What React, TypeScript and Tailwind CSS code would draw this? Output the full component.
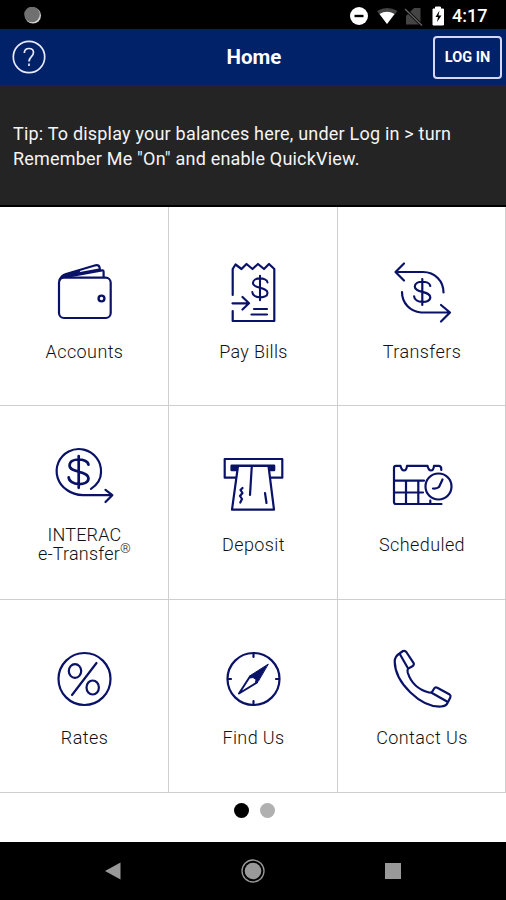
import type { ReactNode } from "react";

const NAVY = "#0a1268";

function Icon({ shift, children }: { shift: number; children: ReactNode }) {
  return (
    <svg
      width="110"
      height="85"
      viewBox={`${-shift} 0 110 85`}
      fill="none"
      stroke={NAVY}
      strokeWidth="2.2"
      strokeLinecap="round"
      strokeLinejoin="round"
      className="block shrink-0"
      aria-hidden="true"
    >
      {children}
    </svg>
  );
}

const DollarSign = ({ x, y, s = 1 }: { x: number; y: number; s?: number }) => (
  <g transform={`translate(${x} ${y}) scale(${s})`}>
    <path d="M0 -13V13M8 -6C7 -11.5 -7.5 -12 -7.5 -5.3C-7.5 1 8 -1.3 8 5.3C8 12 -8 11.3 -8.2 4.3" />
  </g>
);

const Wallet = () => (
  <Icon shift={1}>
    <rect x="29" y="27.7" width="51.7" height="40.3" rx="5" />
    <path d="M29.5 30C31 26 33 25 36 24L65.500 15.300Q69 14.800 69.500 17.300L70 20M36 27L72 20.300Q73.6 20 73.6 22V27M42 24.500L69 19.500" />
    <path d="M31.500 27.500C34 24 40 23.500 50 20.500L48 24L36 27Z" fill={NAVY} strokeWidth="1" />
    <circle cx="71.5" cy="48.5" r="2.900" strokeWidth="2.400" />
  </Icon>
);

const Bill = () => (
  <Icon shift={2}>
    <path d="M32.7 45V19L35.5 14.5L41.5 19L46.5 14L52.5 19L58 14L64 19L69 14L74.3 19V71H32.7V61" />
    <path d="M32.5 53.3H49M42.5 47L49 53.3L42.5 59.5M54 59H67M51.5 64.5H67" />
    <DollarSign x={60} y={38} s={0.94} />
  </Icon>
);

const Transfer = () => (
  <Icon shift={3}>
    <path d="M34 13.5L25.5 22L34 30.5M26 22H53C65 22 73.5 31 73.5 42.5" />
    <path d="M71 55L80 62.5L71 71.5M79 62.5H51C40 61.500 32 53 32 42" />
    <DollarSign x={52.3} y={42} />
  </Icon>
);

const Interac = () => (
  <Icon shift={1}>
    <path d="M61 48.8C67.500 44.500 71 38.500 71 32.500A22.200 22.200 0 1 0 37 50Q43.500 54.800 53 55.2H81.5M75.5 49.8L82.3 55.2L75.5 62" />
    <DollarSign x={48.7} y={32} s={1.22} />
  </Icon>
);

const Deposit = () => (
  <Icon shift={2}>
    <path d="M36 37.7H24.7V19H82.3V37.7H71" />
    <path d="M31.7 25.8H74V30H70.500V26M37.5 26V30H31.7V25.8" fill={NAVY} strokeWidth="2.6" />
    <path d="M38 27.500H68.500L74 69.7H32Z" fill="#fff" stroke="none" />
    <path d="M38 26L32 69.7H74L68.500 26M51.8 26L50 55" />
    <path d="M42.5 48L40.5 50L42.5 53L40 56L42 59L40.3 62.5M65 53L66.5 63" />
  </Icon>
);

const Calendar = () => (
  <Icon shift={3}>
    <path d="M71.5 64H26Q24 64 24 62V28Q24 25.8 26 25.8H30.5Q31.5 30.5 34 30.5T37 25.8H57.5Q58.5 30.5 61 30.5T64 25.8H69Q71.5 26 71.3 30" />
    <path d="M24.5 40.7H54M24.5 52.5H53M36 41V64M48.3 41V64M60.3 60.5V64" />
    <circle cx="68.5" cy="46.5" r="13" />
    <path d="M72.5 39.5L69 47Q67 48.8 63 48.5" />
  </Icon>
);

const Percent = () => (
  <Icon shift={1}>
    <circle cx="54.5" cy="39" r="26" />
    <path d="M66.5 23L42 55" />
    <ellipse cx="45" cy="31" rx="6.2" ry="6.9" />
    <ellipse cx="62.7" cy="47.5" rx="6.2" ry="7" />
  </Icon>
);

const Compass = () => (
  <Icon shift={2}>
    <circle cx="53.5" cy="39" r="26" />
    <path d="M53.5 14V17M53.5 61V64M28.5 39H31M76 39H79" />
    <path d="M50.300 36L39 53.5L57 42.500" strokeWidth="2" />
    <path d="M68 24.3L50.3 35.500L50 38L53 37.500L56 39.500L55.500 43L58 41.500Z" fill={NAVY} strokeWidth="1" />
  </Icon>
);

const Phone = () => (
  <Icon shift={3}>
    <path d="M29.5 13.5L33 11Q35 10.2 36.3 12L43.8 23.3Q44.3 25 42.8 26L38.2 28.6Q37 30 37.7 32.5C40.5 41.5 47.5 49.5 59 52.5Q61.5 53 62.3 51.5L64.5 48Q65.8 47 67.3 47.7L79.7 54.5Q81 55.5 80.3 57.5L77.5 63Q76 66.3 71 66.5C51 67.5 25 43 24.7 21.5Q24.7 16.5 29.5 13.5Z" />
    <path d="M29.8 14L37.8 28M62 53L77 61.5" />
  </Icon>
);

type Tile = { label: ReactNode; icon: ReactNode; tracking: string };

const rows: { box: string; label: string; tiles: Tile[] }[] = [
  {
    box: "h-[199px] pt-[43px]",
    label: "mt-[7px]",
    tiles: [
      { label: "Accounts", icon: <Wallet />, tracking: "tracking-[0.4px]" },
      { label: "Pay Bills", icon: <Bill />, tracking: "tracking-[0.3px]" },
      { label: "Transfers", icon: <Transfer />, tracking: "tracking-[0.4px]" },
    ],
  },
  {
    box: "h-[194px] pt-[34px]",
    label: "mt-[10px]",
    tiles: [
      {
        label: (
          <span className="-mt-[10px] block">
            INTERAC
            <br />
            e-Transfer<sup className="-top-[7px] text-[13.5px] leading-none">®</sup>
          </span>
        ),
        icon: <Interac />,
        tracking: "tracking-[0.2px]",
      },
      { label: "Deposit", icon: <Deposit />, tracking: "tracking-[0.4px]" },
      { label: "Scheduled", icon: <Calendar />, tracking: "tracking-[0.4px]" },
    ],
  },
  {
    box: "h-[193px] pt-[40px]",
    label: "mt-[3px]",
    tiles: [
      { label: "Rates", icon: <Percent />, tracking: "tracking-[0.4px]" },
      { label: "Find Us", icon: <Compass />, tracking: "tracking-[0.4px]" },
      { label: "Contact Us", icon: <Phone />, tracking: "tracking-[0.4px]" },
    ],
  },
];

function StatusBar() {
  return (
    <div className="flex h-[29px] items-center bg-black pt-[2px] pr-[18px] pl-[23px] text-white">
      <svg width="19" height="18" viewBox="0 0 19 18">
        <circle cx="10" cy="8.500" r="8" fill="#d5d5d5" />
        <circle cx="9" cy="7.500" r="7.8" fill="#707070" />
      </svg>
      <svg className="mr-[3px] ml-auto" width="96" height="20" viewBox="0 0 96 20">
        <circle cx="9" cy="10" r="9" fill="#fff" />
        <path d="M4.5 10H13.5" stroke="#000" strokeWidth="2.4" />
        <path d="M27 5Q37 -1 47.500 5L37 18Z" fill="#444" />
        <path d="M29.500 8Q37 3.500 44.500 8L37 18Z" fill="#fff" />
        <path d="M56 10L64 2H70.500V18.500H56Z" fill="#444" />
        <path d="M54 2L71.500 19" stroke="#000" strokeWidth="3" />
        <path d="M55 3L72 19.500" stroke="#666" strokeWidth="1.300" />
        <path d="M83 3H85.500V1H90.500V3H93.500V19H83Z" fill="#fff" stroke="#fff" strokeLinejoin="round" />
        <path d="M89.500 4.500L85.500 11H88L87 16L91.500 9.500H88.500Z" fill="#000" />
      </svg>
      <span className="ml-[3px] w-[36px] text-[18px] leading-none font-medium whitespace-nowrap">4:17</span>
    </div>
  );
}

export default function App() {
  return (
    <div className="flex h-[900px] w-[506px] flex-col overflow-hidden bg-white font-['Roboto','Liberation_Sans',sans-serif]">
      <StatusBar />
      <header className="grid h-[56px] grid-cols-[80px_1fr_80px] items-center bg-[#012169] text-white">
        <button className="ml-[12px] size-[34px]" aria-label="Help">
          <svg width="34" height="34" viewBox="0 0 34 34" fill="none" stroke="#e8eaff" strokeWidth="1.7">
            <circle cx="17" cy="17" r="15.700" />
            <path d="M12.300 13Q12.500 8.500 17 8.500T21.500 12.500C21.500 16.500 17 16.700 17 21.500M17 23.500V26" />
          </svg>
        </button>
        <h1 className="pl-[2px] text-center text-[20.5px] leading-6 font-bold">Home</h1>
        <button className="ml-[7px] h-[43px] w-[69px] rounded-[4px] border-2 border-[#d5d8f5] pt-[2px] text-[14.5px] font-bold whitespace-nowrap">
          LOG IN
        </button>
      </header>
      <section className="h-[122px] border-b-2 border-black bg-[#242424] pt-[36px] pl-[13px] text-[18px] leading-[25px] tracking-[0.2px] text-[#f4f4f4]">
        <p className="whitespace-nowrap">
          Tip: To display your balances here, under Log in &gt; turn
          <br />
          Remember Me "On" and enable QuickView.
        </p>
      </section>
      <main>
        {rows.map((row, r) => (
          <div key={r} className="grid grid-cols-[169px_169px_168px]">
            {row.tiles.map((tile, c) => (
              <div
                key={c}
                className={`flex flex-col items-center border-r border-b border-[#cfcfcf] ${row.box}`}
              >
                {tile.icon}
                <div
                  className={`pl-px text-center text-[18px] leading-[19px] font-light whitespace-nowrap text-[#111] ${row.label} ${tile.tracking}`}
                >
                  {tile.label}
                </div>
              </div>
            ))}
          </div>
        ))}
      </main>
      <div className="flex h-[49px] justify-center gap-[11px] pt-[10px] pl-[2px]">
        <span className="size-[15px] rounded-full bg-black" />
        <span className="size-[15px] rounded-full bg-[#b0b0b0]" />
      </div>
      <nav className="grid h-[58px] grid-cols-[84px_58px_222px_58px_84px] items-center bg-black">
        <svg className="col-start-2 ml-[20px]" width="18" height="20" viewBox="0 0 18 20">
          <path d="M1 10L16.500 1.500V18.500Z" fill="#999" />
        </svg>
        <svg className="ml-[99px]" width="24" height="24" viewBox="0 0 24 24">
          <circle cx="12" cy="12" r="11" fill="none" stroke="#999" strokeWidth="1.300" />
          <circle cx="12" cy="12" r="8.300" fill="#999" />
        </svg>
        <span className="ml-[21px] size-[16px] bg-[#999]" />
      </nav>
    </div>
  );
}
